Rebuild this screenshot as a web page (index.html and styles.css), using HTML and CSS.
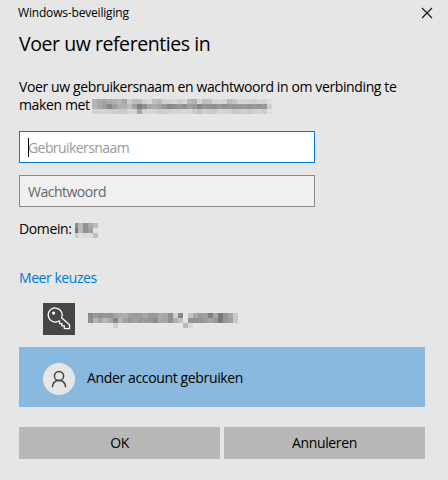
FILE: index.html
```html
<!DOCTYPE html>
<html lang="nl">
<head>
<meta charset="utf-8">
<title>Windows-beveiliging</title>
<link rel="stylesheet" href="styles.css">
</head>
<body>
<main class="dialog">
  <header class="titlebar">
    <span class="caption">Windows-beveiliging</span>
    <svg class="close" width="12" height="12" viewBox="0 0 12 12"><path d="M1 1l10 10M11 1L1 11"/></svg>
  </header>
  <h1 class="heading">Voer uw referenties in</h1>
  <p class="message">Voer uw gebruikersnaam en wachtwoord in om verbinding te</p>
  <p class="target"><span class="target-label">maken met</span><svg class="mosaic" id="host" width="180" height="15"></svg></p>
  <div class="field focused"><i class="caret"></i><span>Gebruikersnaam</span></div>
  <div class="field"><span>Wachtwoord</span></div>
  <p class="domain"><span class="domain-label">Domein:</span><svg class="mosaic realm" id="realm" width="23" height="15" viewBox="2 0 23 15"></svg></p>
  <a class="more">Meer keuzes</a>
  <div class="account">
    <svg class="tile" width="32" height="32" viewBox="0 0 32 32">
      <rect width="32" height="32" fill="#464646"/>
      <g fill="none" stroke="#fff" stroke-width="1.25" stroke-linejoin="miter">
        <path d="M18.6 14.8A7 7 0 1 0 15.4 18.2L16.6 18.1V20.7H18.9V22.9H21.3V25.2L22.4 25.5H26.5V21.8Z"/>
        <circle cx="10.6" cy="10" r="1" fill="#fff"/>
      </g>
    </svg>
    <svg class="mosaic user" id="user" width="150" height="15"></svg>
  </div>
  <div class="account selected">
    <svg width="32" height="32" viewBox="0 0 32 32">
      <circle cx="16" cy="16" r="16" fill="#e6e6e6"/>
      <g fill="none" stroke="#444" stroke-width="1.5"><circle cx="16" cy="13" r="4.6"/><path d="M9.4 24.2C9.7 20.2 12.3 17.6 16 17.6S22.3 20.2 22.6 24.2"/></g>
    </svg>
    <span class="name">Ander account gebruiken</span>
  </div>
  <footer class="buttons">
    <button class="ok">OK</button>
    <button class="cancel">Annuleren</button>
  </footer>
</main>
<script src="mosaic.js"></script>
</body>
</html>
```
FILE: styles.css
```css
* { box-sizing: border-box; }
body { margin: 0; background: #e6e6e6; font: 14px/18px "Open Sans", "Noto Sans", sans-serif; letter-spacing: -0.38px; color: #000; }
.dialog { width: 448px; height: 480px; padding: 0 23px 0 19px; overflow: hidden; white-space: nowrap; }
h1, p { margin: 0; font-weight: 400; }
.titlebar { display: flex; justify-content: space-between; height: 26px; margin-right: -8px; }
.caption { font-size: 12px; line-height: 26px; letter-spacing: -0.18px; margin-left: -1px; }
.close { margin-top: 7px; stroke: #111; stroke-width: 1.1; fill: none; }
.heading { font-size: 19.5px; line-height: 36px; height: 52px; letter-spacing: -0.44px; }
.message { height: 18px; }
.target { display: flex; height: 35px; }
.target-label { width: 73px; }
.target .mosaic { margin-top: 3px; }
.mosaic { shape-rendering: crispEdges; }
.field { position: relative; display: flex; align-items: center; width: 296px; height: 32px; margin-bottom: 12px; padding: 1px 0 0 8px; border: 1px solid #8a8a8a; background: #f0f0f0; color: #666; letter-spacing: -0.5px; }
.focused { border-color: #0078d7; background: #fff; color: #999; letter-spacing: -0.58px; }
.caret { position: absolute; left: 8px; top: 6px; width: 1px; height: 19px; background: #000; }
.domain { display: flex; height: 49px; padding-top: 1px; }
.domain-label { width: 56px; }
.realm { margin-top: 3px; }
.more { display: block; height: 18px; padding-top: 1px; color: #0078d7; letter-spacing: -0.45px; }
.account { display: flex; align-items: flex-start; height: 61px; width: 406px; padding: 17px 0 0 24px; }
.user { margin: 10px 0 0 13px; }
.selected { height: 60px; align-items: center; background: #8ab9e0; padding-top: 4px; }
.name { margin: -3px 0 0 12px; letter-spacing: -0.36px; }
.buttons { display: flex; gap: 4px; margin-top: 20px; }
button { width: 201px; height: 32px; padding: 0; border: 0; background: #b8b8b8; font: inherit; letter-spacing: inherit; color: inherit; }
```
FILE: mosaic.js
```js
// Each row is a list of two-digit grey levels, one per 5px cell.
const mosaics = {
  host: [
    'b4a9a5acb0b8a9ccbcbcd0d8c0b8d0d2d8d0d8b8b0d4bcc0d4d8d4bcc4d6d6d4d0d8d4e0',
    'b4a89c8a9cb0b0bca08090a8aca49888909890a09888989290989098949898949894' + '98d0',
    'd0d0d4d0ccccccd8d4a4d4d8d4ccd0d0d4d4d8d8ccc4d0ccc8d4d4d0c8ccd0c8d0d4cce0'
  ],
  realm: ['8ab892aabb', '78bb92a0e2', 'ccdedcdcc0'],
  user: [
    '8a98909894a4acb0a09a9ca89898aaa490d088e6c4a89ca080a87894a4c8',
    '90b4a4b8a888b4a098a0989c988ca8a490b0c0e69490949ca4987898a0c8',
    'e6e6e6e6e6d0e6e6e6e6e6e6e6e6e6e6e6e6e6b8d8e6e6e6e6e6e6e6e6e6'
  ]
};
for (const [id, rows] of Object.entries(mosaics)) {
  document.getElementById(id).innerHTML = rows.map((row, y) =>
    row.match(/../g).map((g, x) =>
      `<rect x="${x * 5}" y="${y * 5}" width="5" height="5" fill="#${g}${g}${g}"/>`).join('')).join('');
}
```
